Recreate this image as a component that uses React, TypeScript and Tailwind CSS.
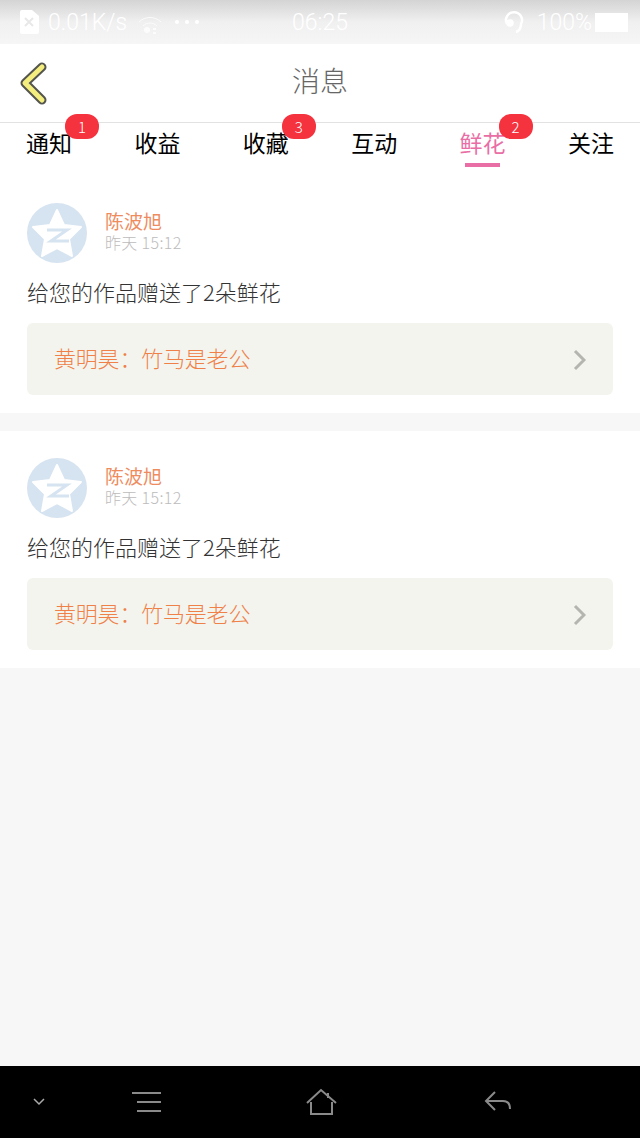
const fontStack = "font-['Noto_Sans_CJK_SC','Noto_Sans',sans-serif]";

const tabs = [
  { label: "通知", badge: "1" },
  { label: "收益" },
  { label: "收藏", badge: "3" },
  { label: "互动" },
  { label: "鲜花", badge: "2", active: true },
  { label: "关注" },
];

function StatusBar() {
  return (
    <div className="grid h-[44px] grid-cols-[1fr_auto_1fr] items-center bg-gradient-to-b from-[#d4d4d4] via-[#f0f0f0] to-[#f6f6f6] px-[12px] leading-none text-white">
      <div className="ml-[7px] flex items-center">
        <svg width="20" height="24" viewBox="0 0 20 24">
          <path d="M3 0h10l7 6v16a2 2 0 0 1-2 2H3a2 2 0 0 1-2-2V2a2 2 0 0 1 2-2z" fill="#fff" />
          <path d="M6 8l8 8M14 8l-8 8" stroke="#e8e8e8" strokeWidth="2" />
        </svg>
        <span className="ml-[9px] font-['Roboto'] text-[23px] font-light">0.01K/s</span>
        <svg className="ml-[11px] mt-[4px]" width="24" height="20" viewBox="0 0 24 20" fill="none" stroke="#fff" opacity="0.8">
          <path d="M1 8c6-6 16-6 22 0M5 12c4-4 10-4 14 0" strokeWidth="1" />
          <circle cx="9" cy="16" r="3" fill="#fff" stroke="none" />
          <path d="M15 15h3M15 19h3" strokeWidth="2" />
        </svg>
        <div className="ml-[13px] flex gap-[6px]">
          <div className="h-[4px] w-[4px] rounded-full bg-white" />
          <div className="h-[4px] w-[4px] rounded-full bg-white" />
          <div className="h-[4px] w-[4px] rounded-full bg-white" />
        </div>
      </div>
      <span className="font-['Roboto'] text-[23px] font-light">06:25</span>
      <div className="flex items-center justify-end">
        <svg width="20" height="24" viewBox="0 0 20 24" fill="none" stroke="#fff" strokeWidth="2.5">
          <path d="M3 14a8 8 0 1 1 14 0c0 4-2 7-5 8" />
          <circle cx="6" cy="13" r="2.5" fill="#fff" />
        </svg>
        <span className="ml-[13px] font-['Roboto'] text-[23px] font-light">100%</span>
        <div className="ml-[3px] h-[19px] w-[33px] border-2 border-white bg-white" />
      </div>
    </div>
  );
}

function Header() {
  return (
    <div className="relative flex h-[79px] items-center justify-center border-b border-[#e2e2e2] bg-white pb-[7px]">
      <svg className="absolute left-[18px] top-[17px]" width="30" height="46" viewBox="0 0 30 46" fill="none" strokeLinecap="round" strokeLinejoin="round">
        <path d="M24 6L7 22l17 17" stroke="#55554f" strokeWidth="9" />
        <path d="M24 6L7 22l17 17" stroke="#f4ee7e" strokeWidth="5" />
      </svg>
      <span className="text-[28px] font-light leading-none text-[#666]">消息</span>
    </div>
  );
}

function Tabs() {
  return (
    <div className="flex h-[53px] justify-between bg-white px-[26px]">
      {tabs.map((tab) => (
        <div key={tab.label} className="relative flex w-[46px] flex-col items-center">
          <span className={`mt-[5px] whitespace-nowrap text-[23px] leading-[28px] ${tab.active ? "text-[#e96ea5]" : "text-black"}`}>
            {tab.label}
          </span>
          {tab.active && <div className="mt-[7px] h-[4px] w-[35px] bg-[#e96ea5]" />}
          {tab.badge && (
            <div className="absolute left-[39px] top-[-9px] flex h-[25px] w-[34px] items-center justify-center rounded-[12px] bg-[#f5333f] text-[15px] font-light leading-none text-white">
              {tab.badge}
            </div>
          )}
        </div>
      ))}
    </div>
  );
}

function Avatar() {
  return (
    <div className="flex h-[60px] w-[60px] shrink-0 items-center justify-center rounded-full bg-[#d6e3f0]">
      <svg width="50" height="50" viewBox="0 0 50 50">
        <path d="M25 2l7 15 17 2-12 12 3 17-15-8-15 8 3-17L1 19l17-2z" fill="#fff" stroke="#fff" strokeLinejoin="round" strokeWidth="2" />
        <path d="M15 22h20L19 33h18" fill="none" stroke="#d6e3f0" strokeWidth="3" />
      </svg>
    </div>
  );
}

function FlowerCard() {
  return (
    <div className="bg-white px-[27px] pb-[18px] pt-[27px]">
      <div className="flex items-center">
        <Avatar />
        <div className="ml-[18px] mt-[-4px]">
          <div className="text-[19px] leading-[22px] text-[#ee8c5f]">陈波旭</div>
          <div className="text-[16px] font-light leading-[20px] tracking-[0.35px] text-[#bcbcbc]">昨天 15:12</div>
        </div>
      </div>
      <div className="mt-[12px] text-[22px] font-light leading-[32px] text-[#333]">给您的作品赠送了2朵鲜花</div>
      <div className="mt-[16px] flex h-[72px] items-center justify-between rounded-[6px] bg-[#f4f4ee] pb-[4px] pl-[27px] pr-[27px]">
        <span className="text-[22px] font-light tracking-[-0.2px] text-[#ee8048]">黄明昊：竹马是老公</span>
        <svg className="mt-[6px]" width="13" height="22" viewBox="0 0 13 22" fill="none" stroke="#b4b4b0" strokeWidth="3">
          <path d="M2 2l9 9-9 9" />
        </svg>
      </div>
    </div>
  );
}

function NavBar() {
  return (
    <div className="flex h-[72px] items-center bg-black pl-[33px]">
      <svg width="12" height="8" viewBox="0 0 12 8" fill="none" stroke="#aaa" strokeWidth="1.5">
        <path d="M1 1l5 5 5-5" />
      </svg>
      <svg className="ml-[87px]" width="29" height="22" viewBox="0 0 29 22" fill="none" stroke="#8a8a8a" strokeWidth="2">
        <path d="M0 2h29M5 11h24M5 20h24" />
      </svg>
      <svg className="ml-[145px]" width="32" height="28" viewBox="0 0 32 28" fill="none" stroke="#8a8a8a" strokeWidth="2">
        <path d="M1 15L15 2l15 13M5 14v12h21V14M22 5v5" />
      </svg>
      <svg className="ml-[146px]" width="28" height="22" viewBox="0 0 28 22" fill="none" stroke="#8a8a8a" strokeWidth="2">
        <path d="M11 1L2 10l9 9M2 10h17c5 0 7 3 7 8" />
      </svg>
    </div>
  );
}

export default function App() {
  return (
    <div className={`flex h-[1138px] w-[640px] flex-col overflow-hidden bg-[#f7f7f7] ${fontStack}`}>
      <StatusBar />
      <Header />
      <Tabs />
      <FlowerCard />
      <div className="h-[18px]" />
      <FlowerCard />
      <div className="flex-1" />
      <NavBar />
    </div>
  );
}
